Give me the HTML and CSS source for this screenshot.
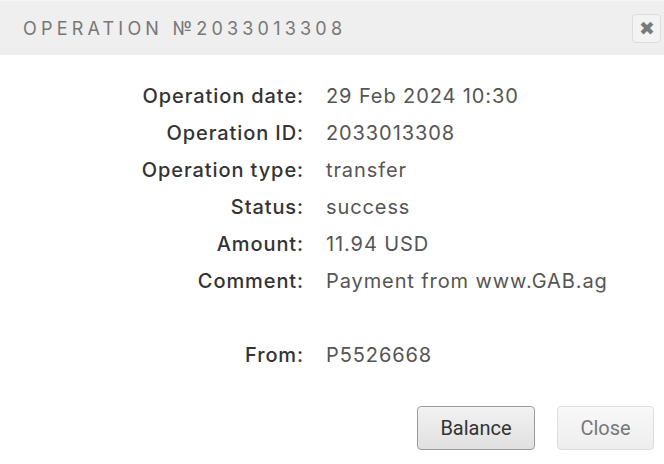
FILE: index.html
```html
<!DOCTYPE html>
<html lang="en">
  <head>
    <meta charset="UTF-8" />
    <title>Operation</title>
    <link rel="stylesheet" href="styles.css">
  </head>
  <body>
    <div class="dialog">
      <div class="dialog-header">
        <span class="dialog-title">OPERATION №2033013308</span>
        <button class="close-x">&#10006;</button>
      </div>

      <div class="details">
        <div class="label">Operation date:</div>
        <div class="value">29 Feb 2024 10:30</div>

        <div class="label">Operation ID:</div>
        <div class="value">2033013308</div>

        <div class="label">Operation type:</div>
        <div class="value">transfer</div>

        <div class="label">Status:</div>
        <div class="value">success</div>

        <div class="label">Amount:</div>
        <div class="value">11.94 USD</div>

        <div class="label">Comment:</div>
        <div class="value">Payment from www.GAB.ag</div>

        <!-- spacer row -->
        <div class="label"></div>
        <div class="value"></div>

        <div class="label">From:</div>
        <div class="value">P5526668</div>
      </div>

      <div class="dialog-buttons">
        <button class="btn btn-main">Balance</button>
        <button class="btn btn-close">Close</button>
      </div>
    </div>
  </body>
</html>
```

FILE: styles.css
```css
body {
  margin: 0;
  background-color: #fff;
  font-family: Inter, "DejaVu Sans", sans-serif;
}

.dialog {
  width: 664px;
  height: 464px;
  display: flex;
  flex-direction: column;
}

.dialog-header {
  height: 54px;
  border-top: 1px solid #f6f6f6;
  background-color: #efefef;
  display: flex;
  align-items: center;
  justify-content: space-between;
  padding: 0 3px 0 23px;
}

.dialog-title {
  font-size: 18px;
  letter-spacing: 4.2px;
  color: #777;
}

.close-x {
  width: 29px;
  height: 29px;
  padding: 0;
  border: 1px solid #dcdcdc;
  border-radius: 4px;
  background-color: #f3f3f3;
  color: #7a7a7a;
  font-size: 19px;
  line-height: 27px;
  cursor: pointer;
}

.details {
  display: grid;
  grid-template-columns: 304px auto;
  grid-auto-rows: 37px;
  column-gap: 22px;
  align-items: center;
  margin-top: 22px;
  font-size: 20px;
  letter-spacing: 0.9px;
}

.label {
  text-align: right;
  color: #333;
  font-weight: 500;
}

.value {
  color: #555;
}

.dialog-buttons {
  display: flex;
  justify-content: flex-end;
  gap: 22px;
  margin-top: 33px;
  padding-right: 10px;
}

.btn {
  height: 44px;
  font-family: Roboto, sans-serif;
  font-size: 20px;
  border-radius: 4px;
  cursor: pointer;
}

.btn-main {
  width: 118px;
  color: #333;
  border: 1px solid #999;
  background: linear-gradient(#f2f2f2, #e0e0e0);
}

.btn-close {
  width: 97px;
  color: #777;
  border: 1px solid #ddd;
  background: linear-gradient(#f8f8f8, #eeeeee);
}
```
